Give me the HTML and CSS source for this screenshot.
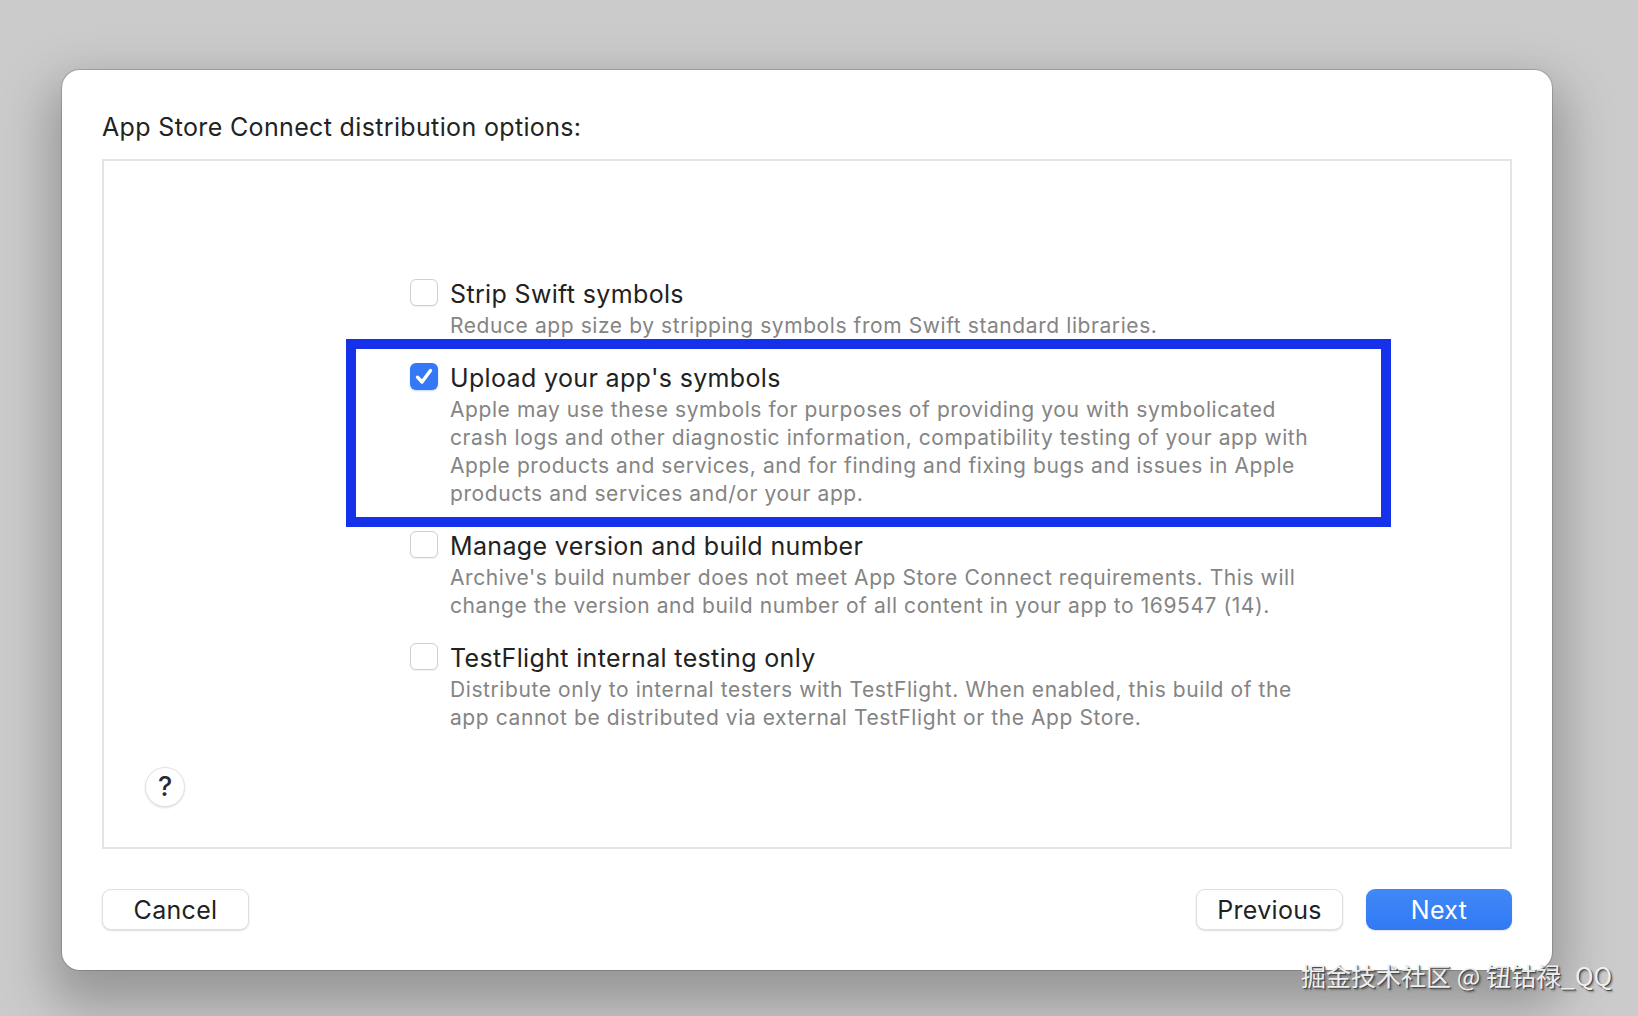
FILE: index.html
```html
<!DOCTYPE html>
<html>
<head>
    <meta charset="UTF-8" />
    <title>Distribute App</title>
    <link rel="stylesheet" href="styles.css">
</head>
<body>
    <div class="sheet">
        <div class="sheet-title">App Store Connect distribution options:</div>

        <div class="panel">
            <div class="options">
                <div class="option">
                    <span class="check"></span>
                    <div class="option-text">
                        <div class="option-title">Strip Swift symbols</div>
                        <div class="option-desc">Reduce app size by stripping symbols from Swift standard libraries.</div>
                    </div>
                </div>

                <div class="option marked">
                    <span class="check on">
                        <svg width="28" height="27" viewBox="0 0 28 27"><path d="M7.5 14.2 L12 19 L20.5 7.5" fill="none" stroke="#fff" stroke-width="3.4" stroke-linecap="round" stroke-linejoin="round"/></svg>
                    </span>
                    <div class="option-text">
                        <div class="option-title">Upload your app's symbols</div>
                        <div class="option-desc">Apple may use these symbols for purposes of providing you with symbolicated<br>crash logs and other diagnostic information, compatibility testing of your app with<br>Apple products and services, and for finding and fixing bugs and issues in Apple<br>products and services and/or your app.</div>
                    </div>
                </div>

                <div class="option">
                    <span class="check"></span>
                    <div class="option-text">
                        <div class="option-title">Manage version and build number</div>
                        <div class="option-desc">Archive's build number does not meet App Store Connect requirements. This will<br>change the version and build number of all content in your app to 169547 (14).</div>
                    </div>
                </div>

                <div class="option">
                    <span class="check"></span>
                    <div class="option-text">
                        <div class="option-title">TestFlight internal testing only</div>
                        <div class="option-desc">Distribute only to internal testers with TestFlight. When enabled, this build of the<br>app cannot be distributed via external TestFlight or the App Store.</div>
                    </div>
                </div>
            </div>

            <button class="help">?</button>
        </div>

        <div class="footer">
            <button class="btn">Cancel</button>
            <div class="footer-right">
                <button class="btn">Previous</button>
                <button class="btn primary">Next</button>
            </div>
        </div>
    </div>

    <div class="watermark">掘金技术社区 @ 钮钴禄_QQ</div>
</body>
</html>
```

FILE: styles.css
```css
/* page */
body {
    margin: 0;
    height: 1016px;
    overflow: hidden;
    background-color: #cbcbcb;
    font-family: Inter, "Noto Sans", sans-serif;
    position: relative;
}

/* the dialog sheet */
.sheet {
    box-sizing: border-box;
    width: 1490px;
    height: 900px;
    margin: 70px 0 0 62px;
    padding: 42px 40px 0 40px;
    background-color: #fff;
    border-radius: 18px;
    box-shadow: 0 0 0 1px rgba(0, 0, 0, 0.16), 0 24px 50px 12px rgba(0, 0, 0, 0.26);
    display: flex;
    flex-direction: column;
}

.sheet-title {
    font-size: 25px;
    line-height: 30px;
    color: #232323;
    letter-spacing: 0.35px;
}

.panel {
    box-sizing: border-box;
    height: 690px;
    margin-top: 17px;
    border: 2px solid #e4e4e4;
    padding-top: 116px;
    display: flex;
    flex-direction: column;
}

.options {
    margin-left: 306px;
    display: flex;
    flex-direction: column;
    gap: 20.5px;
}

.option {
    display: flex;
    align-items: flex-start;
}

/* blue annotation box drawn over the second option */
.option.marked {
    position: relative;
}
.option.marked::before {
    content: "";
    position: absolute;
    left: -64px;
    top: -22px;
    width: 1025px;
    height: 168px;
    border: 10px solid #1532ea;
    pointer-events: none;
}

.check {
    box-sizing: border-box;
    width: 28px;
    height: 27px;
    margin-top: 2px;
    margin-right: 12px;
    flex-shrink: 0;
    border-radius: 6px;
    border: 1px solid #cfcfcf;
    background-color: #fff;
    box-shadow: 0 1px 1px rgba(0, 0, 0, 0.06);
}

.check.on {
    border: none;
    background-color: #3478f6;
    box-shadow: 0 1px 2px rgba(52, 120, 246, 0.3);
}
.check svg {
    display: block;
}

.option-title {
    font-size: 25px;
    line-height: 34px;
    color: #222;
    letter-spacing: 0.35px;
}

.option-desc {
    margin-top: 1px;
    font-size: 21px;
    line-height: 28.2px;
    color: #848484;
    white-space: nowrap;
    letter-spacing: 0.58px;
}

.help {
    margin: auto 0 40px 41px;
    width: 40px;
    height: 40px;
    padding: 0;
    border-radius: 50%;
    border: 1px solid #e2e2e2;
    background-color: #fff;
    box-shadow: 0 1px 2px rgba(0, 0, 0, 0.12);
    font-family: Inter, sans-serif;
    font-size: 27px;
    font-weight: 500;
    color: #2a2a2a;
    line-height: 38px;
}

/* bottom buttons */
.footer {
    margin-top: 40px;
    display: flex;
    justify-content: space-between;
}

.footer-right {
    display: flex;
    gap: 23px;
}

.btn {
    box-sizing: border-box;
    width: 147px;
    height: 41px;
    padding: 0;
    border-radius: 9px;
    border: 1px solid #e0e0e0;
    background-color: #fff;
    box-shadow: 0 1px 2px rgba(0, 0, 0, 0.14);
    font-family: Inter, sans-serif;
    font-size: 25px;
    letter-spacing: 0.3px;
    color: #222;
}

.btn.primary {
    width: 146px;
    border: none;
    background: linear-gradient(#4189f7, #3079f3);
    color: #fff;
    box-shadow: 0 1px 2px rgba(0, 0, 0, 0.12);
}

/* watermark laid over the screenshot */
.watermark {
    position: absolute;
    right: 26px;
    top: 959px;
    font-family: "Noto Sans CJK SC", "Noto Sans", sans-serif;
    font-size: 25px;
    line-height: 32px;
    color: #efefef;
    text-shadow: 1px 1px 0 #4a4a4a, 2px 2px 2px rgba(0, 0, 0, 0.35);
}
```
